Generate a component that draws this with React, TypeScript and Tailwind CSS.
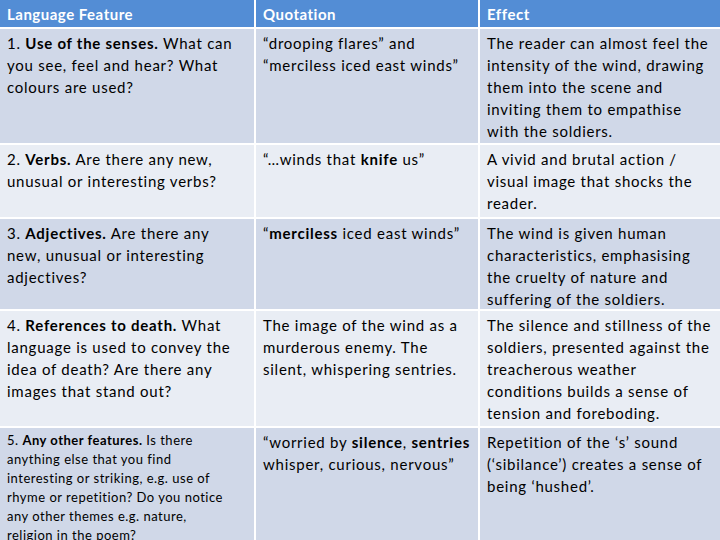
import React from "react";

const dark = "bg-[#d0d8e8]";
const light = "bg-[#e9edf4]";

function Cell({ bg, lines, small }: { bg: string; lines: React.ReactNode[]; small?: boolean }) {
  return (
    <div
      className={`${bg} px-[7px] pt-[3px] text-black whitespace-nowrap overflow-hidden ${
        small ? "text-[13px] leading-[19px] tracking-[0.5px]" : "text-[15px] leading-[22px] tracking-[0.75px]"
      }`}
    >
      {lines.map((l, i) => (
        <div key={i}>{l}</div>
      ))}
    </div>
  );
}

const head = "bg-[#538dd5] px-[7px] pt-[3px] text-[15px] leading-[22px] tracking-[0.5px] font-bold text-white";

export default function App() {
  return (
    <div className="w-[720px] h-[540px] overflow-hidden bg-white" style={{ fontFamily: "Lato, 'Open Sans', sans-serif" }}>
      <div className="grid grid-cols-[254px_222px_240px] grid-rows-[27px_114px_72px_90px_115px_140px] gap-[2px]">
        <div className={head}>Language Feature</div>
        <div className={head}>Quotation</div>
        <div className={head}>Effect</div>

        <Cell
          bg={dark}
          lines={[
            <>1. <b>Use of the senses.</b> What can</>,
            "you see, feel and hear? What",
            "colours are used?",
          ]}
        />
        <Cell bg={dark} lines={["“drooping flares” and", "“merciless iced east winds”"]} />
        <Cell
          bg={dark}
          lines={[
            "The reader can almost feel the",
            "intensity of the wind, drawing",
            "them into the scene and",
            "inviting them to empathise",
            "with the soldiers.",
          ]}
        />

        <Cell
          bg={light}
          lines={[<>2. <b>Verbs.</b> Are there any new,</>, "unusual or interesting verbs?"]}
        />
        <Cell bg={light} lines={[<>“…winds that <b>knife</b> us”</>]} />
        <Cell
          bg={light}
          lines={["A vivid and brutal action /", "visual image that shocks the", "reader."]}
        />

        <Cell
          bg={dark}
          lines={[<>3. <b>Adjectives.</b> Are there any</>, "new, unusual or interesting", "adjectives?"]}
        />
        <Cell bg={dark} lines={[<>“<b>merciless</b> iced east winds”</>]} />
        <Cell
          bg={dark}
          lines={[
            "The wind is given human",
            "characteristics, emphasising",
            "the cruelty of nature and",
            "suffering of the soldiers.",
          ]}
        />

        <Cell
          bg={light}
          lines={[
            <>4. <b>References to death.</b> What</>,
            "language is used to convey the",
            "idea of death? Are there any",
            "images that stand out?",
          ]}
        />
        <Cell
          bg={light}
          lines={["The image of the wind as a", "murderous enemy. The", "silent, whispering sentries."]}
        />
        <Cell
          bg={light}
          lines={[
            "The silence and stillness of the",
            "soldiers, presented against the",
            "treacherous weather",
            "conditions builds a sense of",
            "tension and foreboding.",
          ]}
        />

        <Cell
          bg={dark}
          small
          lines={[
            <>5. <b>Any other features.</b> Is there</>,
            "anything else that you find",
            "interesting or striking, e.g. use of",
            "rhyme or repetition? Do you notice",
            "any other themes e.g. nature,",
            "religion in the poem?",
          ]}
        />
        <Cell
          bg={dark}
          lines={[
            <>“worried by <b>silence</b>, <b>sentries</b></>,
            "whisper, curious, nervous”",
          ]}
        />
        <Cell
          bg={dark}
          lines={["Repetition of the ‘s’ sound", "(‘sibilance’) creates a sense of", "being ‘hushed’."]}
        />
      </div>
    </div>
  );
}
